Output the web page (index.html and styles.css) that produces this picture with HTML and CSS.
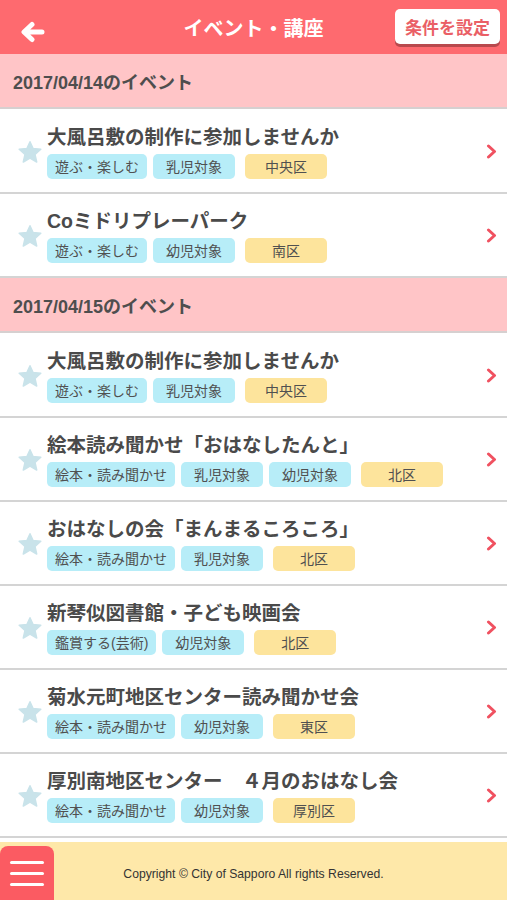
FILE: index.html
```html
<!DOCTYPE html>
<html lang="ja">
<head>
<meta charset="utf-8">
<title>イベント・講座</title>
<link rel="stylesheet" href="styles.css">
</head>
<body>
<div class="app">
  <header class="topbar">
    <a class="back" aria-label="戻る">
      <svg width="25" height="22" viewBox="0 0 25 22"><path d="M22 11 H5 M12 3.5 L4 11 L12 18.5" fill="none" stroke="#fff" stroke-width="5" stroke-linecap="round" stroke-linejoin="round"/></svg>
    </a>
    <h1 class="title">イベント・講座</h1>
    <button class="filter">条件を設定</button>
  </header>

  <main class="list">
    <div class="day">2017/04/14のイベント</div>
    <div class="item">
      <span class="star"><svg width="24" height="23" viewBox="0 0 24 23"><path d="M12 0.8 L15.1 7.6 L22.8 8.3 L17 13.5 L18.7 21 L12 17.1 L5.3 21 L7 13.5 L1.2 8.3 L8.9 7.6 Z" fill="#c9e3ea" stroke="#c9e3ea" stroke-width="1.5" stroke-linejoin="round"/></svg></span>
      <div class="body">
        <div class="name">大風呂敷の制作に参加しませんか</div>
        <div class="tags"><span class="tag">遊ぶ・楽しむ</span><span class="tag">乳児対象</span><span class="tag area">中央区</span></div>
      </div>
      <span class="chev"><svg width="11" height="15" viewBox="0 0 11 15"><path d="M2.5 2 L8.5 7.5 L2.5 13" fill="none" stroke="#f05160" stroke-width="3" stroke-linecap="round" stroke-linejoin="round"/></svg></span>
    </div>
    <div class="item">
      <span class="star"><svg width="24" height="23" viewBox="0 0 24 23"><path d="M12 0.8 L15.1 7.6 L22.8 8.3 L17 13.5 L18.7 21 L12 17.1 L5.3 21 L7 13.5 L1.2 8.3 L8.9 7.6 Z" fill="#c9e3ea" stroke="#c9e3ea" stroke-width="1.5" stroke-linejoin="round"/></svg></span>
      <div class="body">
        <div class="name">Coミドリプレーパーク</div>
        <div class="tags"><span class="tag">遊ぶ・楽しむ</span><span class="tag">幼児対象</span><span class="tag area">南区</span></div>
      </div>
      <span class="chev"><svg width="11" height="15" viewBox="0 0 11 15"><path d="M2.5 2 L8.5 7.5 L2.5 13" fill="none" stroke="#f05160" stroke-width="3" stroke-linecap="round" stroke-linejoin="round"/></svg></span>
    </div>

    <div class="day">2017/04/15のイベント</div>
    <div class="item">
      <span class="star"><svg width="24" height="23" viewBox="0 0 24 23"><path d="M12 0.8 L15.1 7.6 L22.8 8.3 L17 13.5 L18.7 21 L12 17.1 L5.3 21 L7 13.5 L1.2 8.3 L8.9 7.6 Z" fill="#c9e3ea" stroke="#c9e3ea" stroke-width="1.5" stroke-linejoin="round"/></svg></span>
      <div class="body">
        <div class="name">大風呂敷の制作に参加しませんか</div>
        <div class="tags"><span class="tag">遊ぶ・楽しむ</span><span class="tag">乳児対象</span><span class="tag area">中央区</span></div>
      </div>
      <span class="chev"><svg width="11" height="15" viewBox="0 0 11 15"><path d="M2.5 2 L8.5 7.5 L2.5 13" fill="none" stroke="#f05160" stroke-width="3" stroke-linecap="round" stroke-linejoin="round"/></svg></span>
    </div>
    <div class="item">
      <span class="star"><svg width="24" height="23" viewBox="0 0 24 23"><path d="M12 0.8 L15.1 7.6 L22.8 8.3 L17 13.5 L18.7 21 L12 17.1 L5.3 21 L7 13.5 L1.2 8.3 L8.9 7.6 Z" fill="#c9e3ea" stroke="#c9e3ea" stroke-width="1.5" stroke-linejoin="round"/></svg></span>
      <div class="body">
        <div class="name">絵本読み聞かせ「おはなしたんと」</div>
        <div class="tags"><span class="tag">絵本・読み聞かせ</span><span class="tag">乳児対象</span><span class="tag">幼児対象</span><span class="tag area">北区</span></div>
      </div>
      <span class="chev"><svg width="11" height="15" viewBox="0 0 11 15"><path d="M2.5 2 L8.5 7.5 L2.5 13" fill="none" stroke="#f05160" stroke-width="3" stroke-linecap="round" stroke-linejoin="round"/></svg></span>
    </div>
    <div class="item">
      <span class="star"><svg width="24" height="23" viewBox="0 0 24 23"><path d="M12 0.8 L15.1 7.6 L22.8 8.3 L17 13.5 L18.7 21 L12 17.1 L5.3 21 L7 13.5 L1.2 8.3 L8.9 7.6 Z" fill="#c9e3ea" stroke="#c9e3ea" stroke-width="1.5" stroke-linejoin="round"/></svg></span>
      <div class="body">
        <div class="name">おはなしの会「まんまるころころ」</div>
        <div class="tags"><span class="tag">絵本・読み聞かせ</span><span class="tag">乳児対象</span><span class="tag area">北区</span></div>
      </div>
      <span class="chev"><svg width="11" height="15" viewBox="0 0 11 15"><path d="M2.5 2 L8.5 7.5 L2.5 13" fill="none" stroke="#f05160" stroke-width="3" stroke-linecap="round" stroke-linejoin="round"/></svg></span>
    </div>
    <div class="item">
      <span class="star"><svg width="24" height="23" viewBox="0 0 24 23"><path d="M12 0.8 L15.1 7.6 L22.8 8.3 L17 13.5 L18.7 21 L12 17.1 L5.3 21 L7 13.5 L1.2 8.3 L8.9 7.6 Z" fill="#c9e3ea" stroke="#c9e3ea" stroke-width="1.5" stroke-linejoin="round"/></svg></span>
      <div class="body">
        <div class="name">新琴似図書館・子ども映画会</div>
        <div class="tags"><span class="tag">鑑賞する(芸術)</span><span class="tag">幼児対象</span><span class="tag area">北区</span></div>
      </div>
      <span class="chev"><svg width="11" height="15" viewBox="0 0 11 15"><path d="M2.5 2 L8.5 7.5 L2.5 13" fill="none" stroke="#f05160" stroke-width="3" stroke-linecap="round" stroke-linejoin="round"/></svg></span>
    </div>
    <div class="item">
      <span class="star"><svg width="24" height="23" viewBox="0 0 24 23"><path d="M12 0.8 L15.1 7.6 L22.8 8.3 L17 13.5 L18.7 21 L12 17.1 L5.3 21 L7 13.5 L1.2 8.3 L8.9 7.6 Z" fill="#c9e3ea" stroke="#c9e3ea" stroke-width="1.5" stroke-linejoin="round"/></svg></span>
      <div class="body">
        <div class="name">菊水元町地区センター読み聞かせ会</div>
        <div class="tags"><span class="tag">絵本・読み聞かせ</span><span class="tag">幼児対象</span><span class="tag area">東区</span></div>
      </div>
      <span class="chev"><svg width="11" height="15" viewBox="0 0 11 15"><path d="M2.5 2 L8.5 7.5 L2.5 13" fill="none" stroke="#f05160" stroke-width="3" stroke-linecap="round" stroke-linejoin="round"/></svg></span>
    </div>
    <div class="item">
      <span class="star"><svg width="24" height="23" viewBox="0 0 24 23"><path d="M12 0.8 L15.1 7.6 L22.8 8.3 L17 13.5 L18.7 21 L12 17.1 L5.3 21 L7 13.5 L1.2 8.3 L8.9 7.6 Z" fill="#c9e3ea" stroke="#c9e3ea" stroke-width="1.5" stroke-linejoin="round"/></svg></span>
      <div class="body">
        <div class="name">厚別南地区センター　４月のおはなし会</div>
        <div class="tags"><span class="tag">絵本・読み聞かせ</span><span class="tag">幼児対象</span><span class="tag area">厚別区</span></div>
      </div>
      <span class="chev"><svg width="11" height="15" viewBox="0 0 11 15"><path d="M2.5 2 L8.5 7.5 L2.5 13" fill="none" stroke="#f05160" stroke-width="3" stroke-linecap="round" stroke-linejoin="round"/></svg></span>
    </div>
  </main>

  <footer class="footer">
    <button class="menu" aria-label="メニュー"><span></span><span></span><span></span></button>
    <p class="copy">Copyright © City of Sapporo All rights Reserved.</p>
  </footer>
</div>
</body>
</html>
```

FILE: styles.css
```css
* { box-sizing: border-box; }
html, body { margin: 0; padding: 0; }
body {
  font-family: "Liberation Sans", "Noto Sans CJK JP", sans-serif;
  background: #fff;
  color: #4a4a4a;
}
.app {
  width: 507px;
  height: 900px;
  display: flex;
  flex-direction: column;
  overflow: hidden;
}
.topbar {
  flex: 0 0 54px;
  background: #fe6a6f;
  display: grid;
  grid-template-columns: 1fr auto 1fr;
  align-items: center;
}
.back {
  display: flex;
  padding-left: 20px;
  padding-top: 10px;
}
.title {
  margin: 0;
  color: #fff;
  font-size: 20px;
  font-weight: 700;
  letter-spacing: 0;
}
.filter {
  justify-self: end;
  margin-right: 7px;
  margin-top: -1px;
  width: 105px;
  height: 35px;
  border: none;
  border-radius: 5px;
  background: #fff;
  color: #ea5f66;
  font-family: "Noto Sans CJK JP", sans-serif;
  font-size: 17px;
  font-weight: 700;
  padding: 0;
  box-shadow: 0 3px 0 #b8494d;
}
.list {
  flex: 1;
  overflow: hidden;
}
.day {
  height: 55px;
  background: #ffc5c7;
  border-bottom: 2px solid #d6d0d0;
  padding-left: 13px;
  display: flex;
  align-items: center;
  font-size: 18px;
  font-weight: 700;
  color: #4e4e4e;
}
.day + .item { height: 85px; padding-top: 1px; }
.item {
  height: 84px;
  border-bottom: 2px solid #d4d4d4;
  display: flex;
  align-items: center;
}
.star {
  flex: 0 0 47px;
  display: flex;
  justify-content: center;
  padding-left: 12px;
  padding-top: 2px;
}
.body {
  flex: 1;
  display: flex;
  flex-direction: column;
  gap: 6px;
  padding-top: 2px;
}
.name {
  font-size: 19.5px;
  line-height: 22px;
  font-weight: 700;
  color: #4a4a4a;
  white-space: nowrap;
}
.tags {
  display: flex;
  gap: 6px;
}
.tag {
  min-width: 82px;
  height: 25px;
  padding: 0 8px;
  border-radius: 5px;
  background: #b7edf8;
  color: #505050;
  font-size: 14px;
  display: flex;
  align-items: center;
  justify-content: center;
  white-space: nowrap;
}
.tag.area {
  background: #fde49c;
  margin-left: 4px;
}
.chev {
  flex: 0 0 30px;
  display: flex;
  padding-left: 9px;
}
.footer {
  flex: 0 0 58px;
  background: #fee8a9;
  display: flex;
  align-items: center;
  justify-content: center;
  position: relative;
}
.menu {
  position: absolute;
  left: 0;
  bottom: 0;
  width: 54px;
  height: 54px;
  border: none;
  border-radius: 8px 8px 0 0;
  background: #fb5b62;
  display: flex;
  flex-direction: column;
  justify-content: center;
  align-items: center;
  gap: 8px;
  padding: 0;
}
.menu span {
  display: block;
  width: 34px;
  height: 3px;
  border-radius: 2px;
  background: #fff;
}
.copy {
  margin: 0;
  font-size: 12.2px;
  color: #333;
  padding-top: 6px;
}
```
